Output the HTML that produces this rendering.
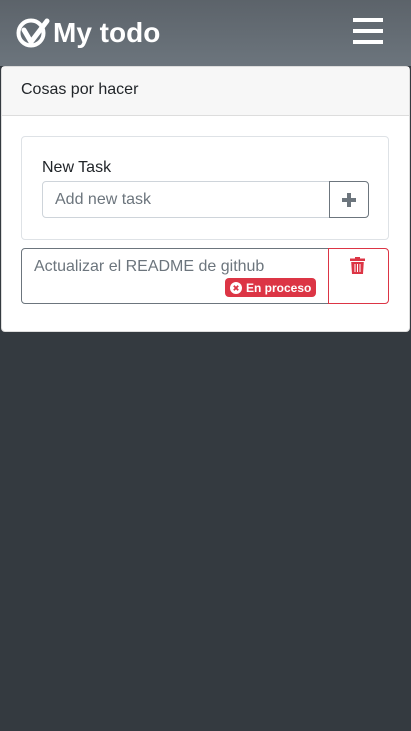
<!DOCTYPE html>
<html><head><style>
*{box-sizing:border-box;margin:0;padding:0}
body{width:411px;height:731px;background:#343a40;font-family:"Liberation Sans",sans-serif;position:relative;overflow:hidden}
.hdr{position:absolute;left:0;top:0;width:411px;height:66px;background:linear-gradient(#5c636a,#6c757d)}
.logo{position:absolute;left:16px;top:17px;display:flex;align-items:center;color:#fff;font-weight:bold;font-size:28px}
.card{position:absolute;left:1px;top:66px;width:409px;height:266px;background:#fff;border:1px solid #ddd;border-radius:4px}
.ch{height:49px;background:#f7f7f7;border-bottom:1px solid #ddd;padding:14px 19px;font-size:16px;color:#212529}
.inner{position:absolute;left:19px;top:69px;width:368px;height:104px;border:1px solid #dee2e6;border-radius:4px}
.lbl{position:absolute;left:20px;top:22px;font-size:16px;color:#212529}
.inp{position:absolute;left:20px;top:44px;width:288px;height:37px;border:1px solid #ced4da;border-radius:4px 0 0 4px;padding:9px 12px;font-size:16px;color:#6c757d}
.btn{position:absolute;left:307px;top:44px;width:40px;height:37px;border:1px solid #6c757d;border-radius:0 4px 4px 0;display:flex;align-items:center;justify-content:center}
.task{position:absolute;left:19px;top:181px;width:308px;height:56px;border:1px solid #6c757d;border-radius:4px 0 0 4px;padding:9px 12px;font-size:16px;color:#6c757d}
.badge{position:absolute;left:203px;top:29px;width:91px;height:19px;background:#dc3545;border-radius:4px;color:#fff;font-weight:bold;font-size:12px;display:flex;align-items:center;padding-left:5px;white-space:nowrap}
.del{position:absolute;left:326px;top:181px;width:61px;height:56px;border:1px solid #dc3545;border-radius:0 4px 4px 0}
</style></head><body>
<div class="hdr">
 <div class="logo"><svg width="34" height="32" viewBox="0 0 34 32"><circle cx="15" cy="16" r="12.5" fill="none" stroke="#fff" stroke-width="4"/><path d="M8 13 L15 25 L31 4" fill="none" stroke="#fff" stroke-width="5" stroke-linecap="round" stroke-linejoin="round"/></svg><span style="margin-left:3px">My todo</span></div>
 <svg style="position:absolute;left:353px;top:18px" width="30" height="26"><rect y="0" width="30" height="4" fill="#fff"/><rect y="11" width="30" height="4" fill="#fff"/><rect y="22" width="30" height="4" fill="#fff"/></svg>
</div>
<div class="card">
 <div class="ch">Cosas por hacer</div>
 <div class="inner">
  <div class="lbl">New Task</div>
  <div class="inp">Add new task</div>
  <div class="btn"><svg width="14" height="14"><rect x="5" y="0" width="4" height="14" fill="#6c757d"/><rect x="0" y="5" width="14" height="4" fill="#6c757d"/></svg></div>
 </div>
 <div class="task">Actualizar el README de github
  <div class="badge"><svg width="12" height="12" viewBox="0 0 12 12"><circle cx="6" cy="6" r="6" fill="#fff"/><path d="M3.8 3.8L8.2 8.2M8.2 3.8L3.8 8.2" stroke="#dc3545" stroke-width="1.8"/></svg><span style="margin-left:4px">En proceso</span></div>
 </div>
 <div class="del"><svg style="position:absolute;left:21px;top:8px" width="15" height="17" viewBox="0 0 15 17"><rect x="0" y="1.5" width="15" height="2.5" fill="#dc3545"/><rect x="5" y="0" width="5" height="2" fill="#dc3545"/><path d="M1.2 5H13.8L13 17H2Z" fill="#dc3545"/><path d="M5 7V15M7.5 7V15M10 7V15" stroke="#fff" stroke-width="1"/></svg></div>
</div>
</body></html>
